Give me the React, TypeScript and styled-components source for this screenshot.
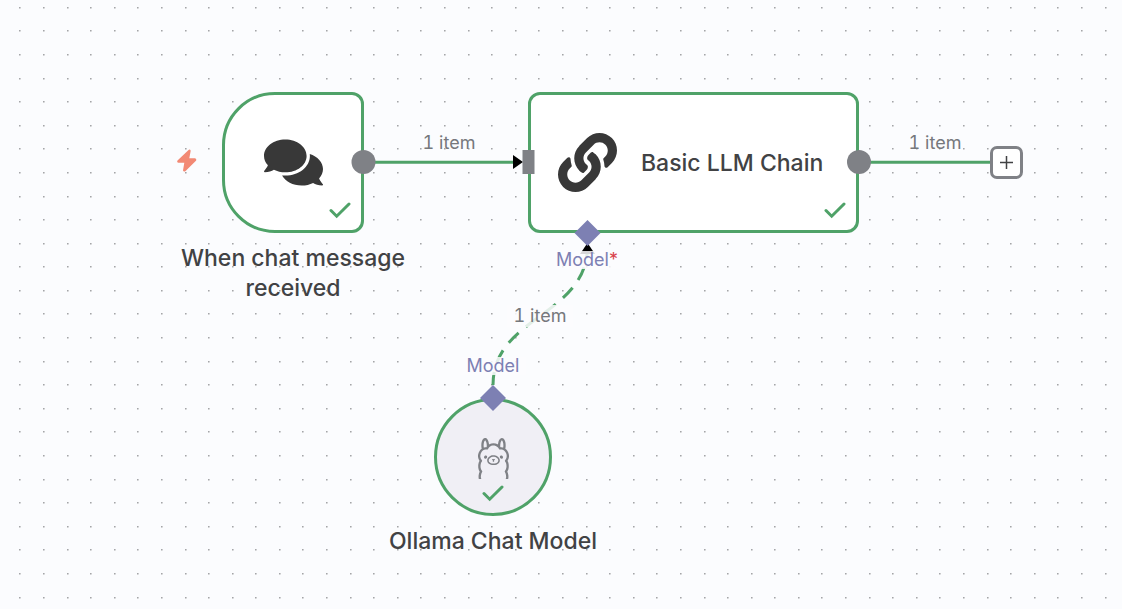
import React from 'react';
import styled, { createGlobalStyle } from 'styled-components';
import { FaComments, FaLink } from 'react-icons/fa';
import { SiOllama } from 'react-icons/si';

const GREEN = '#4fa268';
const GREY = '#7f8186';
const VIOLET = '#7d80b3';

const GlobalStyle = createGlobalStyle`
  * { box-sizing: border-box; }
  body {
    margin: 0;
    background: #fbfcfe;
    font-family: Inter, "Liberation Sans", sans-serif;
  }
`;

const Canvas = styled.main`
  position: relative;
  width: 100%;
  min-height: 100vh;
  overflow: hidden;
  color: #414244;
`;

const Layer = styled.svg`
  position: absolute;
  inset: 0;
  width: 100%;
  height: 100%;
`;

const Node = styled.section<{ $x: number; $y: number }>`
  position: absolute;
  left: ${(p) => p.$x}px;
  top: ${(p) => p.$y}px;
  display: flex;
  flex-direction: column;
  align-items: center;
  gap: 10px;
`;

const Card = styled.div<{ $w: number; $h: number; $radius: string }>`
  position: relative;
  width: ${(p) => p.$w}px;
  height: ${(p) => p.$h}px;
  display: flex;
  align-items: center;
  justify-content: center;
  border: 3px solid ${GREEN};
  border-radius: ${(p) => p.$radius};
  background: #fff;
  color: #383838;
`;

const WideCard = styled(Card)`
  justify-content: flex-start;
  gap: 24px;
  padding-left: 27px;
`;

const RoundCard = styled(Card)`
  padding-top: 2px;
  background: #f0eff5;
  color: ${GREY};
`;

const NodeTitle = styled.h2`
  margin: 0;
  color: #414244;
  font-size: 23px;
  line-height: 30px;
  font-weight: 500;
  text-align: center;
`;

const Caption = styled(NodeTitle)`
  width: 258px;
`;

const CheckMark = styled.svg<{ $centered?: boolean }>`
  position: absolute;
  right: ${(p) => (p.$centered ? '45px' : '10px')};
  bottom: 11px;
  width: 22px;
  height: 18px;
  fill: none;
  stroke: ${GREEN};
  stroke-width: 3;
  stroke-linecap: round;
`;

const Label = styled.span<{ $x: number; $y: number; $veil?: boolean }>`
  position: absolute;
  left: ${(p) => p.$x}px;
  top: ${(p) => p.$y}px;
  width: 66px;
  font-size: 18px;
  line-height: 22px;
  text-align: center;
  white-space: nowrap;
  color: #76787c;
  background: ${(p) => (p.$veil ? 'rgba(251, 252, 254, 0.85)' : 'transparent')};
`;

const ItemCount = styled(Label)`
  font-variant-numeric: tabular-nums;
`;

const PortLabel = styled(Label)`
  line-height: 18px;
  color: ${VIOLET};
`;

const Required = styled.span`
  color: #d8434b;
`;

const AddButton = styled.button`
  position: absolute;
  left: 990px;
  top: 146px;
  width: 33px;
  height: 33px;
  padding: 0;
  display: grid;
  place-items: center;
  border: 3px solid ${GREY};
  border-radius: 7px;
  background: #fff;
  color: #414244;
`;

const PITCH = 23.59;

const dotPath = (dx: number, dy: number) => {
  let d = '';
  for (let r = 0; r < 90; r++) {
    for (let c = 0; c < 140; c++) {
      d += `M${Math.round(19.4 + (c - 1) * PITCH) + dx} ${Math.round(6.8 + r * PITCH) + dy}h1v1h-1z`;
    }
  }
  return d;
};

const Check = ({ centered }: { centered?: boolean }) => (
  <CheckMark $centered={centered} viewBox="0 0 22 18" aria-label="Success">
    <path d="M2 9.5L7.7 15.2L20 3" />
  </CheckMark>
);

export default function App() {
  return (
    <>
      <GlobalStyle />
      <Canvas>
        <Layer aria-hidden="true">
          <path d={dotPath(0, 0)} fill="#a4a5a8" />
          <path d={dotPath(1, 0)} fill="#c8c9cb" />
          <path d={dotPath(0, 1)} fill="#cfd0d2" />
          <path d={dotPath(1, 1)} fill="#e2e3e5" />
          <g fill="none" stroke={GREEN} strokeWidth="3">
            <path d="M363 162.3H514" />
            <path d="M859 162.3H991" />
            <path d="M493 385C493 316 587.5 316 587.5 246" strokeDasharray="14 9.5" strokeDashoffset="1" />
          </g>
          <path d="M513 155L523 162L513 169z" fill="#000" />
          <path d="M587.5 243L595 254H580z" fill="#000" />
          <path
            transform="translate(176 149)"
            d="M12.3 1.2L1.5 11.6Q.5 13.5 2.5 13.8H8.3L7 21.5Q7.7 23.4 9.6 22L20.2 11.6Q20.8 9.5 19 9.2H13.3L14.7 1.8Q14-.3 12.3 1.2z"
            fill="#f28974"
          />
        </Layer>

        <Node $x={164} $y={92}>
          <Card $w={142} $h={141} $radius="53px 12px 12px 53px">
            <FaComments size={59} />
            <Check />
          </Card>
          <Caption>When chat message received</Caption>
        </Node>

        <Node $x={528} $y={92}>
          <WideCard $w={331} $h={141} $radius="12px">
            <FaLink size={59} />
            <NodeTitle>Basic LLM Chain</NodeTitle>
            <Check />
          </WideCard>
        </Node>

        <Node $x={364} $y={398}>
          <RoundCard $w={118} $h={118} $radius="50%">
            <SiOllama size={41} />
            <Check centered />
          </RoundCard>
          <Caption>Ollama Chat Model</Caption>
        </Node>

        <ItemCount $x={416} $y={132}>1 item</ItemCount>
        <ItemCount $x={902} $y={132}>1 item</ItemCount>
        <ItemCount $x={507} $y={305} $veil>1 item</ItemCount>
        <PortLabel $x={554} $y={251} $veil>
          Model<Required>*</Required>
        </PortLabel>
        <PortLabel $x={460} $y={357} $veil>Model</PortLabel>

        <Layer aria-hidden="true">
          <g fill={GREY}>
            <circle cx="363.5" cy="162" r="12" />
            <rect x="522.5" y="150" width="12" height="24" />
            <circle cx="859" cy="162" r="12" />
          </g>
          <g fill={VIOLET}>
            <path d="M587.5 220L600.5 233L587.5 246L574.5 233z" />
            <path d="M493 385L506 398L493 411L480 398z" />
          </g>
        </Layer>

        <AddButton type="button" aria-label="Add node">
          <svg width="15" height="15" viewBox="0 0 15 15" fill="none" stroke="currentColor" strokeWidth="1.5">
            <path d="M7.5 1V14M1 7.5H14" />
          </svg>
        </AddButton>
      </Canvas>
    </>
  );
}
